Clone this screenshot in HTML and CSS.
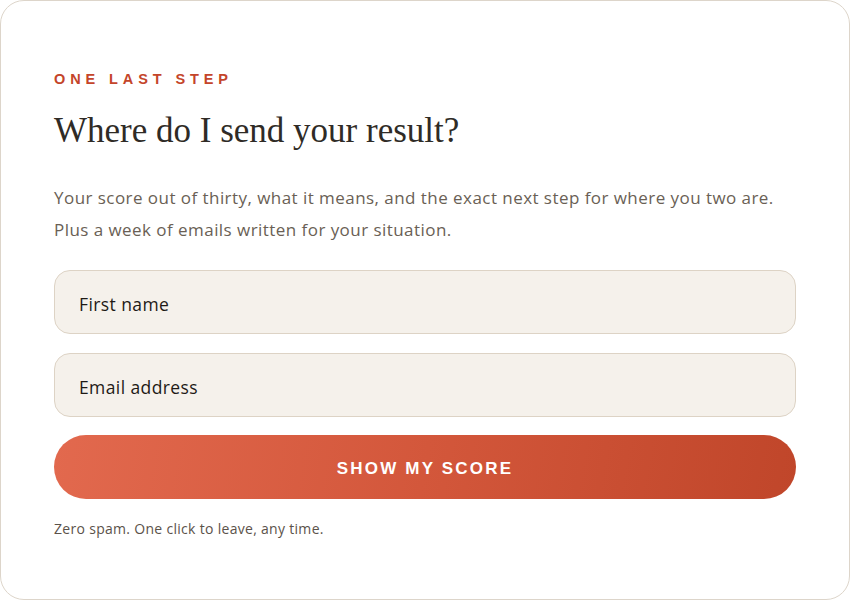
FILE: index.html
```html
<!DOCTYPE html>
<html lang="en">
<head>
<meta charset="utf-8">
<title>One last step</title>
<link rel="stylesheet" href="styles.css">
</head>
<body>
  <main class="card">
    <p class="eyebrow">One last step</p>
    <h1 class="title">Where do I send your result?</h1>
    <p class="lead">Your score out of thirty, what it means, and the exact next step for where you two are. Plus a week of emails written for your situation.</p>
    <form class="form">
      <input class="field" type="text" placeholder="First name">
      <input class="field" type="email" placeholder="Email address">
      <button class="submit" type="button">Show my score</button>
    </form>
    <p class="note">Zero spam. One click to leave, any time.</p>
  </main>
</body>
</html>
```

FILE: styles.css
```css
* {
  box-sizing: border-box;
}

html, body {
  margin: 0;
  background: #ffffff;
}

.card {
  width: 850px;
  height: 600px;
  border: 1px solid #ddd5ca;
  border-radius: 24px;
  background: #ffffff;
  padding: 70px 53px 0;
  font-family: "Open Sans", "Noto Sans", sans-serif;
}

.eyebrow {
  margin: 0;
  font-family: "Liberation Sans", Arial, sans-serif;
  font-weight: 700;
  font-size: 14.5px;
  line-height: 16px;
  letter-spacing: 4.9px;
  text-transform: uppercase;
  color: #c4452a;
}

.title {
  margin: 24px 0 0;
  font-family: "Liberation Serif", "Times New Roman", serif;
  font-weight: 400;
  font-size: 35px;
  line-height: 40px;
  color: #2f2b26;
}

.lead {
  margin: 31px 0 0;
  font-size: 17px;
  line-height: 32px;
  letter-spacing: 0.45px;
  color: #6a5f55;
  max-width: 740px;
}

.form {
  margin-top: 24px;
  display: flex;
  flex-direction: column;
  gap: 19px;
}

.field {
  height: 64px;
  width: 100%;
  border: 1px solid #ddd3c5;
  border-radius: 16px;
  background: #f5f1eb;
  padding: 3px 24px 0;
  font-family: "Open Sans", "Noto Sans", sans-serif;
  font-size: 17.5px;
  letter-spacing: 0.4px;
  color: #1e1a16;
  outline: none;
}

.field::placeholder {
  color: #1e1a16;
  opacity: 1;
}

.submit {
  height: 64px;
  width: 100%;
  margin-top: -1px;
  padding-top: 4px;
  border: 0;
  border-radius: 32px;
  background: linear-gradient(100deg, #e2694e 0%, #d3573b 50%, #c0462a 100%);
  color: #ffffff;
  font-family: "Liberation Sans", Arial, sans-serif;
  font-weight: 700;
  font-size: 17px;
  letter-spacing: 2.2px;
  text-transform: uppercase;
  cursor: pointer;
}

.note {
  margin: 20px 0 0;
  font-size: 14px;
  line-height: 20px;
  letter-spacing: 0.3px;
  color: #5b524a;
}
```
